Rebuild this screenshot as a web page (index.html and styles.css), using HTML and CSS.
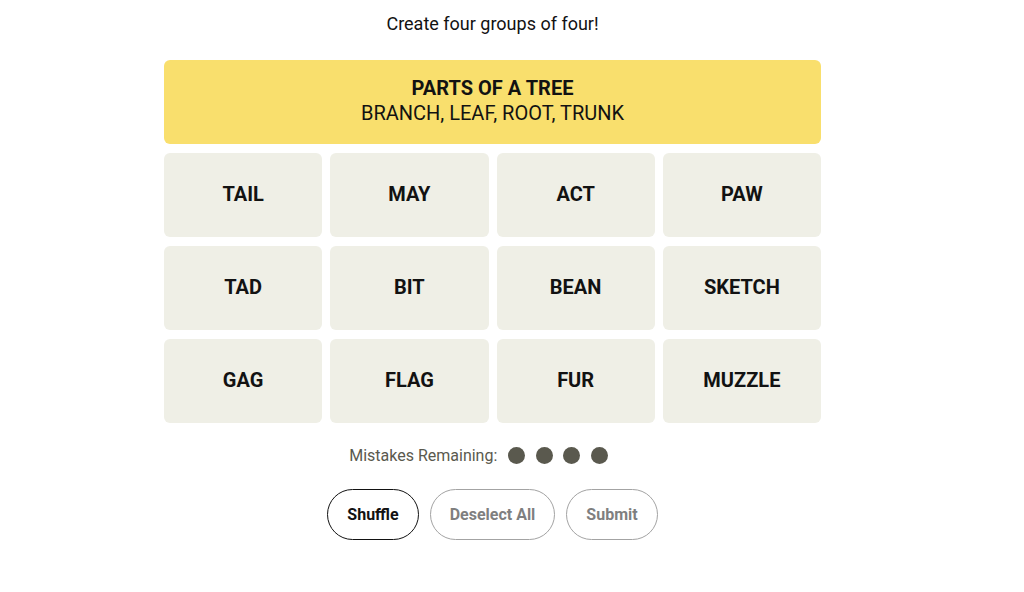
FILE: index.html
```html
<!DOCTYPE html>
<html>
<head>
<meta charset="utf-8">
<link rel="stylesheet" href="styles.css">
</head>
<body>
<main class="game">
  <p class="prompt">Create four groups of four!</p>
  <section class="board">
    <div class="solved yellow">
      <div class="solved-title">PARTS OF A TREE</div>
      <div class="solved-words">BRANCH, LEAF, ROOT, TRUNK</div>
    </div>
    <div class="grid">
      <div class="tile">TAIL</div>
      <div class="tile">MAY</div>
      <div class="tile">ACT</div>
      <div class="tile">PAW</div>
      <div class="tile">TAD</div>
      <div class="tile">BIT</div>
      <div class="tile">BEAN</div>
      <div class="tile">SKETCH</div>
      <div class="tile">GAG</div>
      <div class="tile">FLAG</div>
      <div class="tile">FUR</div>
      <div class="tile">MUZZLE</div>
    </div>
  </section>
  <div class="mistakes">
    <span class="mistakes-label">Mistakes Remaining:</span>
    <span class="dots"><span class="dot"></span><span class="dot"></span><span class="dot"></span><span class="dot"></span></span>
  </div>
  <div class="actions">
    <button class="btn btn-active">Shuffle</button>
    <button class="btn btn-off">Deselect All</button>
    <button class="btn btn-off">Submit</button>
  </div>
</main>
</body>
</html>
```
FILE: styles.css
```css
html, body {
  margin: 0;
  padding: 0;
  background: #ffffff;
}
body {
  font-family: Roboto, "Liberation Sans", sans-serif;
  color: #121212;
}
.game {
  width: 985px;
  display: flex;
  flex-direction: column;
  align-items: center;
}
.prompt {
  margin: 12px 0 0;
  font-size: 18px;
  line-height: 24px;
  height: 24px;
}
.board {
  margin-top: 24px;
  width: 657px;
  display: flex;
  flex-direction: column;
  gap: 9px;
}
.solved {
  height: 84px;
  border-radius: 6px;
  display: flex;
  flex-direction: column;
  align-items: center;
  justify-content: center;
  padding-bottom: 2px;
  box-sizing: border-box;
}
.yellow { background: #f9df6d; }
.solved-title {
  font-weight: 700;
  font-size: 20px;
  line-height: 25px;
}
.solved-words {
  font-size: 20px;
  line-height: 25px;
}
.grid {
  display: grid;
  grid-template-columns: repeat(4, 1fr);
  grid-auto-rows: 84px;
  gap: 9px 8px;
}
.tile {
  background: #efefe6;
  border-radius: 6px;
  display: flex;
  align-items: center;
  justify-content: center;
  font-weight: 700;
  font-size: 20px;
  padding-bottom: 2px;
  box-sizing: border-box;
}
.mistakes {
  margin-top: 20px;
  display: flex;
  align-items: center;
  gap: 11px;
  height: 24px;
  margin-right: 28px;
}
.mistakes-label {
  font-size: 16px;
  color: #5a594e;
}
.dots {
  display: flex;
  gap: 10.5px;
}
.dot {
  width: 17px;
  height: 17px;
  border-radius: 50%;
  background: #5a594e;
}
.actions {
  margin-top: 22px;
  display: flex;
  gap: 11px;
}
.btn {
  height: 51px;
  border-radius: 26px;
  background: #fff;
  font-family: Roboto, "Liberation Sans", sans-serif;
  font-weight: 700;
  font-size: 16px;
  padding: 0 19px;
}
.btn-active {
  border: 1px solid #121212;
  color: #121212;
}
.btn-off {
  border: 1px solid #a3a3a3;
  color: #7f7f7f;
}
```
